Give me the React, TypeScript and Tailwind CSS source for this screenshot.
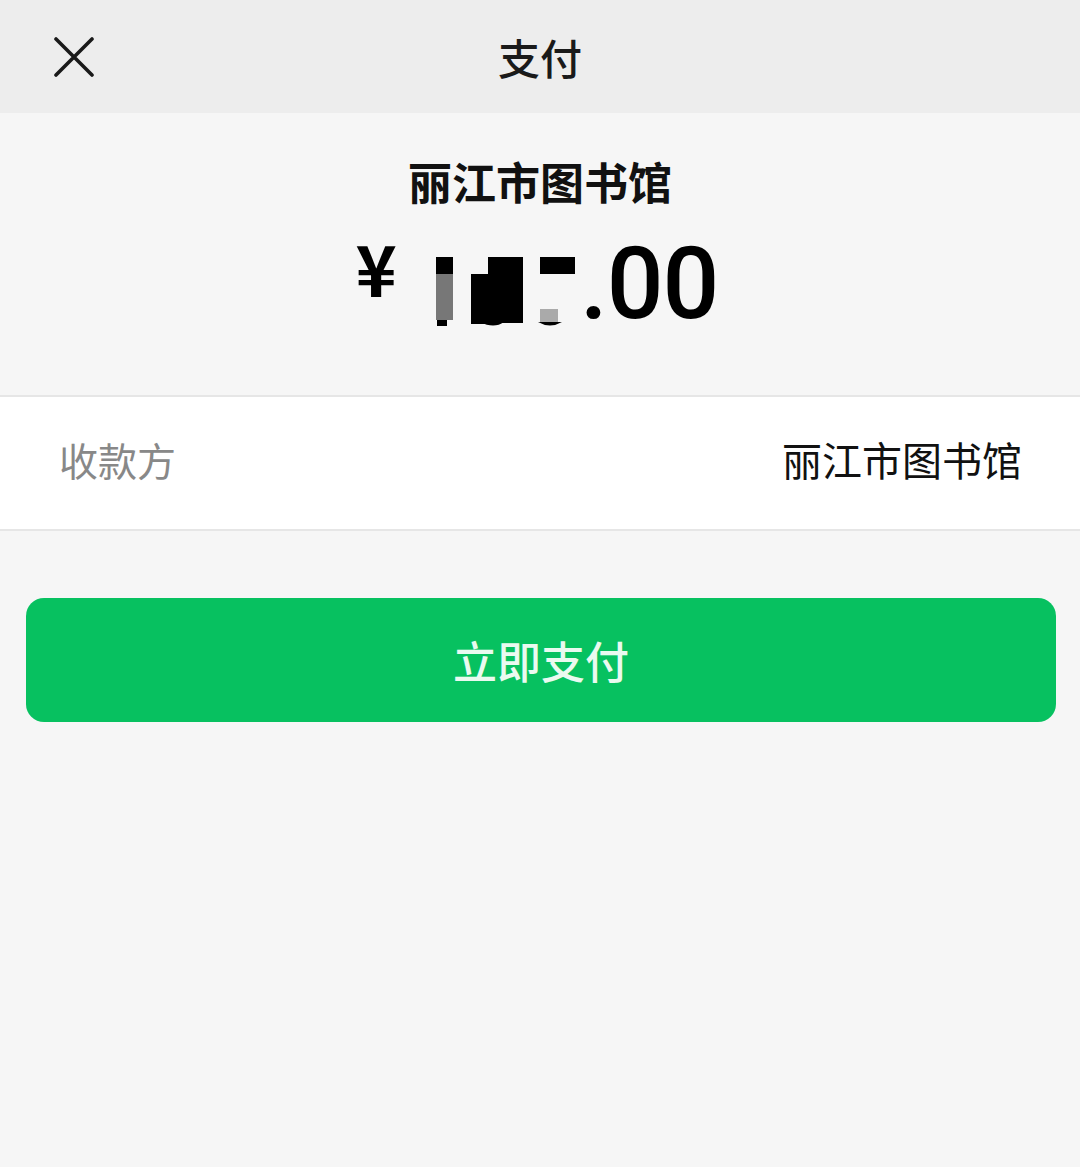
import React from "react";

const cjk = { fontFamily: '"Noto Sans CJK SC", "Noto Sans", sans-serif' };

function Redacted() {
  return (
    <svg width="170" height="80" viewBox="436 245 170 80" className="block">
      <rect x="436" y="250" width="17" height="17" fill="#000" />
      <rect x="436" y="267" width="17" height="46" fill="#777" />
      <rect x="437" y="313" width="10" height="6" fill="#000" />
      <rect x="471" y="267" width="18" height="50" fill="#000" />
      <rect x="488" y="250" width="35" height="66" fill="#000" />
      <path d="M480 315 Q494 322 504 315 Z" fill="#000" />
      <rect x="540" y="250" width="35" height="17" fill="#000" />
      <rect x="540" y="302" width="18" height="13" fill="#aaa" />
      <path d="M538 315 L562 315 Q550 322 538 315 Z" fill="#000" />
    </svg>
  );
}

export default function App() {
  return (
    <div className="w-[1080px] h-[1167px] bg-[#f6f6f6] flex flex-col" style={cjk}>
      <div className="h-[113px] bg-[#ededed] grid grid-cols-[1fr_auto_1fr] items-center">
        <div className="pl-[54px]">
          <svg width="40" height="40" viewBox="0 0 40 40">
            <path d="M2 2 L38 38 M38 2 L2 38" stroke="#1a1a1a" strokeWidth="3.6" strokeLinecap="round" />
          </svg>
        </div>
        <div className="text-[42px] font-medium text-[#1a1a1a] leading-none">支付</div>
        <div />
      </div>

      <div className="h-[282px] flex flex-col items-center pt-[43px]">
        <div className="text-[44px] font-bold text-[#111] leading-[50px]">丽江市图书馆</div>
        <div className="flex items-end mt-[42px] h-[84px] pr-[6px]">
          <span
            className="text-[70px] font-bold text-black leading-none mb-[30px] mr-[39px]"
            style={{ fontFamily: '"Noto Sans CJK SC", sans-serif' }}
          >
            ¥
          </span>
          <Redacted />
          <span
            className="text-[100px] font-medium text-black leading-none tracking-[-1px] mb-[-2px] ml-[-26px]"
            style={{ fontFamily: 'Roboto, "Liberation Sans", sans-serif' }}
          >
            .00
          </span>
        </div>
      </div>

      <div className="h-[136px] bg-white border-y-2 border-[#e6e6e6] flex items-center justify-between pl-[59px] pr-[58px] pb-[8px]">
        <span className="text-[39px] text-[#888] leading-none">收款方</span>
        <span className="text-[40px] text-[#111] leading-none">丽江市图书馆</span>
      </div>

      <div className="pl-[26px] pr-[24px] pt-[67px]">
        <div className="h-[124px] rounded-[18px] bg-[#07c160] flex items-center justify-center">
          <span className="text-[44px] text-[#eafaf0] leading-none font-medium">立即支付</span>
        </div>
      </div>
    </div>
  );
}
